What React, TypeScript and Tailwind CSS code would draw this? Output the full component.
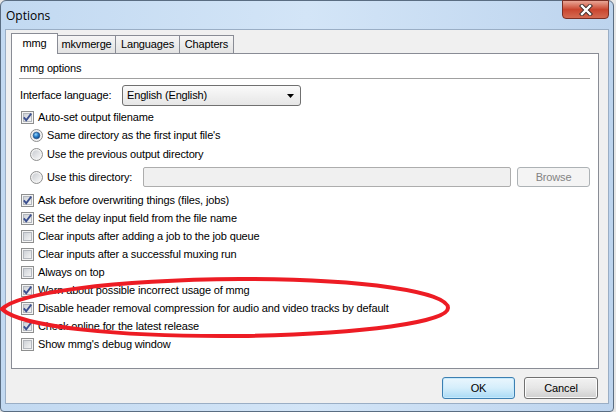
import React, { useId } from 'react';

const FONT = "font-['Liberation_Sans',Arial,sans-serif]";

const CheckBox: React.FC<{ checked?: boolean }> = ({ checked }) => {
  const id = useId();
  return (
    <svg width="13" height="13" viewBox="0 0 13 13" className="shrink-0">
      <defs>
        <linearGradient id={`cb${id}`} x1="0" y1="0" x2="1" y2="1">
          <stop offset="0" stopColor="#cbcfd5" />
          <stop offset="1" stopColor="#f6f6f6" />
        </linearGradient>
      </defs>
      <rect x="0.5" y="0.5" width="12" height="12" fill="#f4f4f4" stroke="#8e8f8f" />
      <rect x="2.5" y="2.5" width="8" height="8" fill={`url(#cb${id})`} stroke="#b3b7bd" />
      {checked && (
        <path d="M2.8 6.4 L5.2 9.2 L10.2 2.6" fill="none" stroke="#3b4f8f" strokeWidth="1.8" />
      )}
    </svg>
  );
};

const Radio: React.FC<{ checked?: boolean }> = ({ checked }) => {
  const id = useId();
  return (
    <svg width="13" height="13" viewBox="0 0 13 13" className="shrink-0">
      <defs>
        <linearGradient id={`rg${id}`} x1="0" y1="0" x2="1" y2="1">
          <stop offset="0" stopColor="#c9ccd1" />
          <stop offset="1" stopColor="#f7f7f7" />
        </linearGradient>
        <radialGradient id={`rb${id}`} cx="0.4" cy="0.35" r="0.7">
          <stop offset="0" stopColor="#9fd8fb" />
          <stop offset="0.45" stopColor="#2f86cf" />
          <stop offset="1" stopColor="#0d3f80" />
        </radialGradient>
      </defs>
      <circle cx="6.5" cy="6.5" r="6" fill="#f2f2f2" stroke="#8e8f8f" />
      <circle cx="6.5" cy="6.5" r="4.3" fill={`url(#rg${id})`} />
      {checked && <circle cx="6.5" cy="6.5" r="3.3" fill={`url(#rb${id})`} stroke="#1c4a82" strokeWidth="0.6" />}
    </svg>
  );
};

const CheckRow: React.FC<{ label: string; checked?: boolean }> = ({ label, checked }) => (
  <div className="h-[18px] flex items-center gap-[4px] pl-[2px]">
    <CheckBox checked={checked} />
    <span>{label}</span>
  </div>
);

const Tab: React.FC<{ label: string; active?: boolean; w: string }> = ({ label, active, w }) =>
  active ? (
    <div className={`${w} h-[21px] -mb-px relative z-10 bg-white border border-b-0 border-[#898c95] flex items-center justify-center pb-[2px]`}>
      {label}
    </div>
  ) : (
    <div className={`${w} h-[18px] bg-gradient-to-b from-[#f6f6f6] to-[#e2e2e2] border border-b-0 border-[#898c95] -ml-px flex items-center justify-center`}>
      {label}
    </div>
  );

export default function App() {
  return (
    <div className={`${FONT} relative w-[616px] h-[412px] overflow-hidden bg-[#e6e6e6] text-[11px] tracking-[-0.15px] text-black`}>
      <div className="w-[614px] h-[412px] flex flex-col rounded-t-[6px] rounded-b-[4px] border border-[#5a6d82] bg-gradient-to-r from-[#c2d9f1] via-[#d3e5f7] to-[#bdd4ee] px-[4px] pb-[7px]">
        {/* Title bar */}
        <div className="h-[28px] flex items-start justify-between">
          <span className="font-['Open_Sans',sans-serif] text-[12px] tracking-normal pl-[1px] pt-[6px]">Options</span>
          <div className="w-[47px] h-[19px] -mt-px mr-0 rounded-b-[4px] border border-[#7a2f25] bg-gradient-to-b from-[#e8a596] via-[#c9452f] to-[#d46a52] flex items-center justify-center">
            <svg width="14" height="12" viewBox="0 0 14 12">
              <path d="M3 2 L11 10 M11 2 L3 10" stroke="#3a2a28" strokeWidth="4.2" strokeLinecap="square" />
              <path d="M3 2 L11 10 M11 2 L3 10" stroke="#ffffff" strokeWidth="2.4" strokeLinecap="square" />
            </svg>
          </div>
        </div>

        {/* Client area */}
        <div className="flex-1 bg-[#f0f0f0] border border-[#9aaec5] pl-[5px] pt-[3px] flex flex-col">
          <div className="flex items-end h-[20px]">
            <Tab label="mmg" active w="w-[47px]" />
            <Tab label="mkvmerge" w="w-[59px]" />
            <Tab label="Languages" w="w-[65px]" />
            <Tab label="Chapters" w="w-[55px]" />
          </div>

          <div className="w-[588px] h-[316px] bg-white border border-[#898c95] pl-[7px] pr-[8px] flex flex-col">
            <div className="h-[16px] mt-[6px] flex items-center pl-[1px]">mmg options</div>
            <div className="h-px mt-[2px] bg-[#a0a0a0] border-b border-white box-content" />

            <div className="h-[21px] mt-[5px] flex items-center pl-[1px]">
              <span className="w-[102px]">Interface language:</span>
              <div className="w-[179px] h-[21px] rounded-[3px] border border-[#707070] bg-gradient-to-b from-[#fafafa] to-[#e6e6e6] flex items-center justify-between pl-[4px] pr-[6px]">
                <span>English (English)</span>
                <svg width="7" height="4" viewBox="0 0 7 4">
                  <path d="M0 0 H7 L3.5 4 Z" fill="#000" />
                </svg>
              </div>
            </div>

            <div className="mt-[2px]">
              <CheckRow label="Auto-set output filename" checked />
            </div>

            <div className="pl-[11px]">
              <div className="h-[19px] flex items-center gap-[4px]">
                <Radio checked />
                <span>Same directory as the first input file's</span>
              </div>
              <div className="h-[19px] flex items-center gap-[4px]">
                <Radio />
                <span>Use the previous output directory</span>
              </div>
              <div className="h-[20px] mt-[3px] flex items-center">
                <Radio />
                <span className="ml-[4px] w-[96px]">Use this directory:</span>
                <div className="w-[369px] h-[20px] bg-[#f0f0f0] border border-[#adadad] rounded-[2px]" />
                <div className="w-[73px] h-[20px] ml-[6px] rounded-[3px] border border-[#adb2b5] bg-[#f4f4f4] text-[#838383] flex items-center justify-center">
                  Browse
                </div>
              </div>
            </div>

            <div className="mt-[4px]">
              <CheckRow label="Ask before overwriting things (files, jobs)" checked />
              <CheckRow label="Set the delay input field from the file name" checked />
              <CheckRow label="Clear inputs after adding a job to the job queue" />
              <CheckRow label="Clear inputs after a successful muxing run" />
              <CheckRow label="Always on top" />
              <CheckRow label="Warn about possible incorrect usage of mmg" checked />
              <CheckRow label="Disable header removal compression for audio and video tracks by default" checked />
              <CheckRow label="Check online for the latest release" checked />
              <CheckRow label="Show mmg's debug window" />
            </div>
          </div>

          <div className="w-[588px] flex justify-end gap-[9px] mt-[8px] pr-[1px]">
            <div className="w-[73px] h-[22px] rounded-[3px] border border-[#3c7fb1] bg-gradient-to-b from-[#eaf6fd] via-[#d5eefb] to-[#a9daf5] shadow-[inset_0_0_0_1px_#c6e9fc] flex items-center justify-center">
              OK
            </div>
            <div className="w-[74px] h-[22px] rounded-[3px] border border-[#707070] bg-gradient-to-b from-[#f2f2f2] via-[#e6e6e6] to-[#cfcfcf] shadow-[inset_0_0_0_1px_#fcfcfc] flex items-center justify-center">
              Cancel
            </div>
          </div>
        </div>
      </div>

      {/* red annotation drawn over the screenshot */}
      <svg className="absolute left-0 top-0 pointer-events-none" width="616" height="412" viewBox="0 0 616 412">
        <path
          d="M2 309 C 18 293, 110 280, 240 279 C 365 279, 448 292, 448 308 C 448 322, 365 334, 240 336 C 120 337, 20 327, 2 309 Z"
          fill="none"
          stroke="#ed1c24"
          strokeWidth="4"
        />
      </svg>
    </div>
  );
}
